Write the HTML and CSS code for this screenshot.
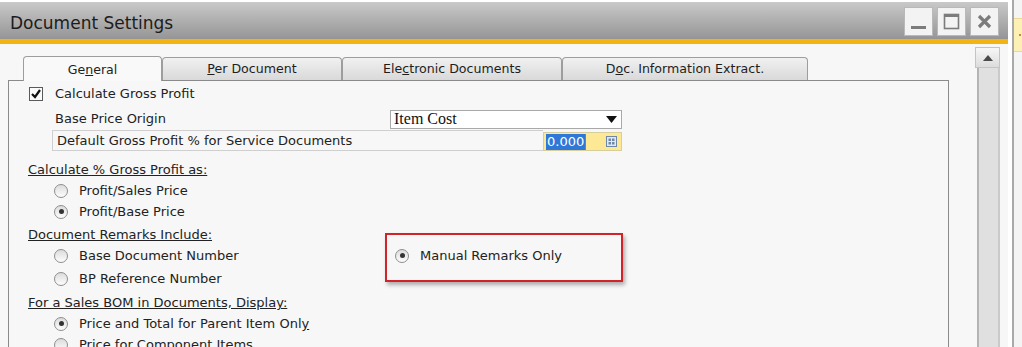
FILE: index.html
```html
<!DOCTYPE html>
<html lang="en">
<head>
    <meta charset="UTF-8">
    <title>Document Settings</title>
    <link rel="stylesheet" href="styles.css">
</head>
<body>
    <div class="screen">
        <div class="window">
            <div class="titlebar">
                <span class="title">Document Settings</span>
                <div class="wbtns">
                    <span class="wbtn"><svg width="17" height="17" viewBox="0 0 17 17"><rect x="1" y="13" width="15" height="3" fill="#7c7c7c"/></svg></span>
                    <span class="wbtn"><svg width="17" height="17" viewBox="0 0 17 17"><rect x="1.5" y="1.5" width="14" height="14" fill="none" stroke="#7c7c7c" stroke-width="1.6"/><rect x="1" y="1" width="15" height="3" fill="#7c7c7c"/></svg></span>
                    <span class="wbtn"><svg width="17" height="17" viewBox="0 0 17 17"><path d="M3 3 L14 14 M14 3 L3 14" stroke="#7c7c7c" stroke-width="3.2"/></svg></span>
                </div>
            </div>
            <div class="client">
                <div class="tabctl">
                    <div class="tabrow">
                        <div class="tab tab-general active">Ge<u>n</u>eral</div>
                        <div class="tab tab-perdoc"><u>P</u>er Document</div>
                        <div class="tab tab-edoc">Ele<u>c</u>tronic Documents</div>
                        <div class="tab tab-extract">D<u>o</u>c. Information Extract.</div>
                    </div>
                    <div class="panel">
                        <div class="row row-first">
                            <span class="check"><svg width="12" height="12" viewBox="0 0 12 12"><path d="M2 6 L5 9 L10 2" fill="none" stroke="#111" stroke-width="2.2"/></svg></span>
                            <span>Calculate Gross Profit</span>
                        </div>
                        <div class="row field-row row-price">
                            <span class="field-label">Base Price Origin</span>
                            <span class="combo">
                                <span class="combo-text">Item Cost</span>
                                <svg width="11" height="7" viewBox="0 0 11 7"><path d="M0 0 H11 L5.5 7 Z" fill="#111"/></svg>
                            </span>
                        </div>
                        <div class="row field-row row-service">
                            <span class="field-label boxed">Default Gross Profit % for Service Documents</span>
                            <span class="numbox">
                                <span class="sel">0.000</span>
                                <span class="calc"><svg width="11" height="11" viewBox="0 0 11 11"><rect x="0.5" y="0.5" width="10" height="10" fill="#dfe8f3" stroke="#6f87a6"/><rect x="2.5" y="2.5" width="2.5" height="2.5" fill="#6f87a6"/><rect x="6" y="2.5" width="2.5" height="2.5" fill="#6f87a6"/><rect x="2.5" y="6" width="2.5" height="2.5" fill="#6f87a6"/><rect x="6" y="6" width="2.5" height="2.5" fill="#6f87a6"/></svg></span>
                            </span>
                        </div>

                        <div class="row heading gap-lg">Calculate % Gross Profit as:</div>
                        <div class="row option"><span class="radio"></span>Profit/Sales Price</div>
                        <div class="row option"><span class="radio on"></span>Profit/Base Price</div>

                        <div class="row heading gap-sm">Document Remarks Include:</div>
                        <div class="remarks">
                            <div class="remarks-col">
                                <div class="row option"><span class="radio"></span>Base Document Number</div>
                                <div class="row option gap-sm"><span class="radio"></span>BP Reference Number</div>
                            </div>
                            <div class="manual">
                                <div class="row option"><span class="radio on"></span>Manual Remarks Only</div>
                                <div class="callout"></div>
                            </div>
                        </div>

                        <div class="row heading gap-md">For a Sales BOM in Documents, Display:</div>
                        <div class="row option"><span class="radio on"></span>Price and Total for Parent Item Onl<u>y</u></div>
                        <div class="row option"><span class="radio"></span>Price for Component Items</div>
                    </div>
                </div>
                <div class="vscroll">
                    <div class="sb-up"><svg width="10" height="6" viewBox="0 0 10 6"><path d="M0 6 L5 0 L10 6 Z" fill="#4a4a4a"/></svg></div>
                    <div class="sb-track"></div>
                </div>
            </div>
        </div>
        <div class="side">
            <div class="side-note"><span class="side-dot"></span></div>
        </div>
    </div>
</body>
</html>
```

FILE: styles.css
```css
body {
    margin: 0;
    padding: 0;
    background-color: #fff;
    font-family: "DejaVu Sans", Tahoma, sans-serif;
    font-size: 13px;
    color: #222;
    overflow: hidden;
}
.screen {
    display: flex;
    width: 1022px;
    height: 347px;
    overflow: hidden;
}
.window {
    width: 1008px;
    display: flex;
    flex-direction: column;
}
.titlebar {
    flex-shrink: 0;
    margin-top: 2px;
    height: 37px;
    background: linear-gradient(#c9c9c9, #959595);
    border-bottom: 5px solid #f3b412;
    display: flex;
    align-items: center;
    justify-content: space-between;
    padding: 0 9px 0 10px;
}
.title {
    font-size: 17px;
    color: #1c1c1c;
    padding-top: 5px;
}
.wbtns {
    display: flex;
    gap: 4px;
    padding-top: 1px;
}
.wbtn {
    width: 27px;
    height: 27px;
    border: 1px solid #b9b9b9;
    background-color: #f3f3f3;
    display: flex;
    align-items: center;
    justify-content: center;
}
.client {
    flex: 1;
    min-height: 0;
    display: flex;
    background-color: #f7f7f7;
}
.tabctl {
    margin: 12px 0 0 8px;
    width: 941px;
    display: flex;
    flex-direction: column;
}
.tabrow {
    flex-shrink: 0;
    display: flex;
    align-items: flex-end;
    height: 24px;
    padding-left: 15px;
}
.tab {
    box-sizing: border-box;
    height: 23px;
    border: 1px solid #9d9d9d;
    border-bottom: none;
    border-radius: 4px 4px 0 0;
    background: linear-gradient(#f1f1f1, #d9d9d9);
    text-align: center;
    line-height: 22px;
    font-size: 12.6px;
    color: #1e1e1e;
}
.tab.active {
    height: 25px;
    margin-bottom: -1px;
    background: #f9f9f9;
    position: relative;
    line-height: 26px;
}
.tab-general { width: 139px; }
.tab-perdoc { width: 180px; }
.tab-edoc { width: 220px; }
.tab-extract { width: 246px; }
.panel {
    flex: 1;
    border: 1px solid #8a8a8a;
    border-bottom: none;
    padding-left: 19px;
}
.row {
    height: 21px;
    display: flex;
    align-items: center;
    white-space: nowrap;
}
.row-first {
    margin-top: 2px;
}
.check {
    box-sizing: border-box;
    width: 14px;
    height: 14px;
    margin: 0 12px 0 1px;
    border: 1px solid #5a5a5a;
    background: #fbfbfb;
    display: flex;
    align-items: center;
    justify-content: center;
}
.field-row {
    margin-left: 24px;
}
.row-price {
    margin-top: 5px;
    height: 20px;
}
.row-service {
    margin-top: 1px;
}
.field-label {
    box-sizing: border-box;
    width: 338px;
    padding-left: 3px;
    height: 20px;
    line-height: 20px;
}
.field-label.boxed {
    width: 491px;
    height: 21px;
    border: 1px solid #cfcfcf;
    border-right: none;
    padding-left: 4px;
}
.combo {
    box-sizing: border-box;
    width: 232px;
    height: 19px;
    border: 1px solid #a9a9a9;
    background: #fff;
    display: flex;
    align-items: center;
    justify-content: space-between;
    padding: 0 4px 0 3px;
}
.combo-text {
    font-family: "Liberation Serif", "Times New Roman", serif;
    font-size: 16px;
    color: #111;
}
.numbox {
    box-sizing: border-box;
    width: 79px;
    height: 19px;
    margin-top: 2px;
    border: 1px solid #d6cf9c;
    background: #fde896;
    display: flex;
    align-items: center;
    justify-content: space-between;
    padding: 0 4px 0 2px;
}
.sel {
    background: #2f78d8;
    color: #fff;
    height: 16px;
    line-height: 16px;
    padding: 0 1px;
    border-right: 1px solid #e2602a;
}
.calc {
    display: flex;
}
.heading {
    text-decoration: underline;
}
.gap-lg {
    margin-top: 8px;
}
.gap-md {
    margin-top: 3px;
}
.gap-sm {
    margin-top: 2px;
}
.option {
    padding-left: 26px;
}
.radio {
    box-sizing: border-box;
    flex-shrink: 0;
    width: 14px;
    height: 14px;
    margin-right: 11px;
    border: 1px solid #8e8e8e;
    border-radius: 50%;
    background: linear-gradient(#dcdcdc, #fdfdfd);
    display: flex;
    align-items: center;
    justify-content: center;
}
.radio.on::after {
    content: "";
    width: 5px;
    height: 5px;
    border-radius: 50%;
    background: #333;
}
.remarks {
    display: flex;
}
.remarks-col {
    width: 367px;
}
.manual {
    position: relative;
}
.manual .option {
    padding-left: 0;
}
.callout {
    position: absolute;
    left: -10px;
    top: -12px;
    width: 234px;
    height: 45px;
    border: 2px solid #d2232a;
    box-shadow: 2px 3px 4px rgba(0, 0, 0, 0.3);
}
.vscroll {
    margin-left: 26px;
    width: 25px;
    display: flex;
    flex-direction: column;
    align-items: flex-end;
}
.sb-up {
    box-sizing: border-box;
    flex-shrink: 0;
    margin-top: 3px;
    width: 25px;
    height: 21px;
    border: 1px solid #c4c4c4;
    background: linear-gradient(#f7f7f7, #dcdcdc);
    display: flex;
    align-items: center;
    justify-content: center;
}
.sb-track {
    flex: 1;
    box-sizing: border-box;
    width: 23px;
    background: #e0e0e0;
    border-left: 2px solid #b4b4b4;
    border-right: 2px solid #cacaca;
}
.side {
    margin-left: 4px;
    flex: 1;
    border-left: 2px solid #a9a9a9;
    background: #f4f4f4;
    padding-top: 18px;
}
.side-note {
    height: 32px;
    background: #fdf0b4;
    border-top: 1px solid #e9d995;
    border-bottom: 1px solid #e9d995;
    display: flex;
    align-items: center;
    padding-left: 5px;
}
.side-dot {
    width: 2px;
    height: 2px;
    background: #d08a20;
}
```
